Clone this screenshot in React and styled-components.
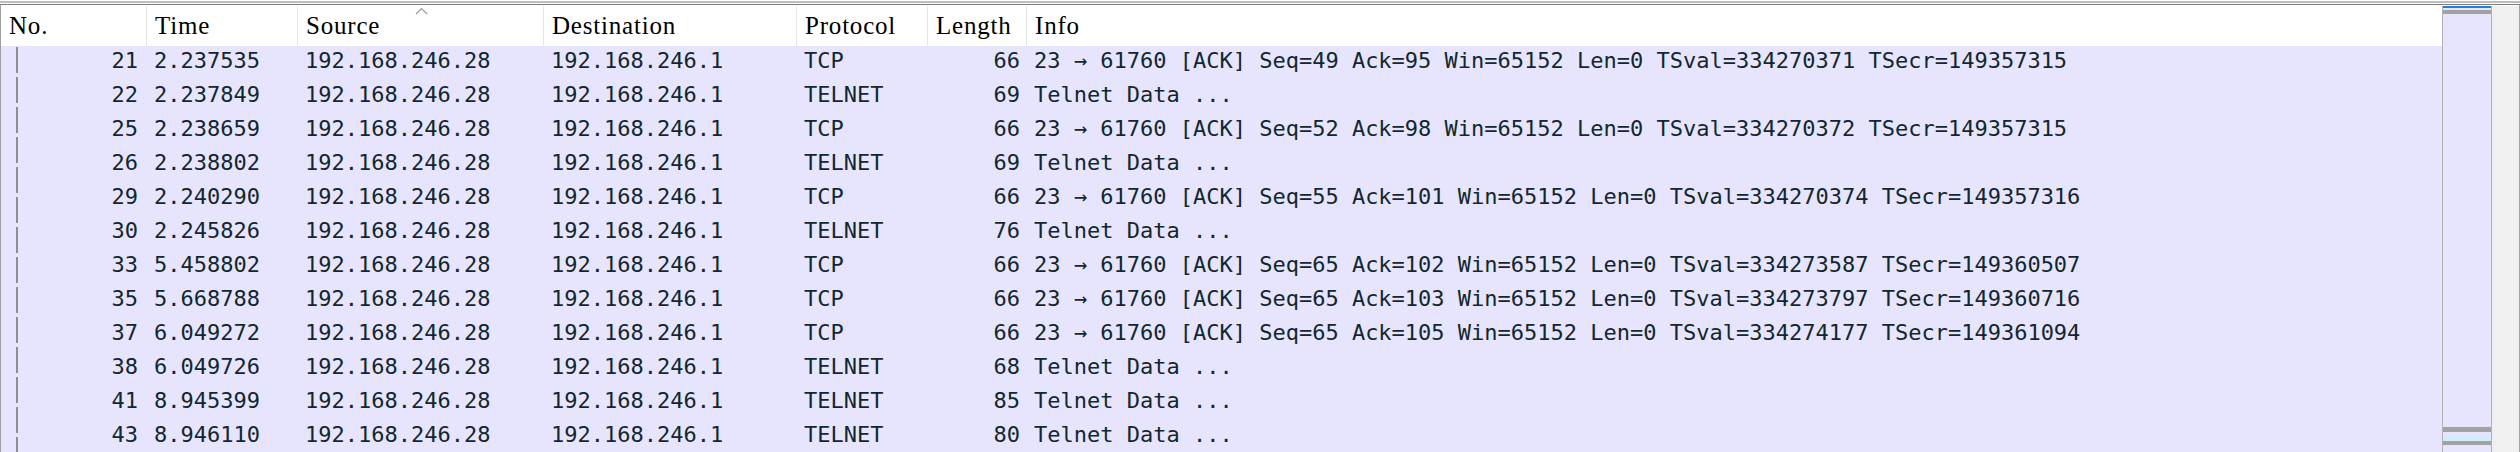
import React from 'react'
import styled, { createGlobalStyle } from 'styled-components'

const GlobalStyle = createGlobalStyle`
  html, body {
    margin: 0;
    padding: 0;
    background: #ffffff;
  }
  * {
    box-sizing: border-box;
  }
`

const columns = [
  { key: 'no', title: 'No.', width: 146, align: 'right' },
  { key: 'time', title: 'Time', width: 151, align: 'left' },
  { key: 'src', title: 'Source', width: 246, align: 'left', sorted: true },
  { key: 'dst', title: 'Destination', width: 253, align: 'left' },
  { key: 'proto', title: 'Protocol', width: 131, align: 'left' },
  { key: 'len', title: 'Length', width: 99, align: 'right' },
  { key: 'info', title: 'Info', width: null, align: 'left' },
]

const ack = (seq, ackNo, tsval, tsecr) =>
  `23 → 61760 [ACK] Seq=${seq} Ack=${ackNo} Win=65152 Len=0 TSval=${tsval} TSecr=${tsecr}`

const packets = [
  ['21', '2.237535', 'TCP', '66', ack(49, 95, '334270371', '149357315')],
  ['22', '2.237849', 'TELNET', '69', 'Telnet Data ...'],
  ['25', '2.238659', 'TCP', '66', ack(52, 98, '334270372', '149357315')],
  ['26', '2.238802', 'TELNET', '69', 'Telnet Data ...'],
  ['29', '2.240290', 'TCP', '66', ack(55, 101, '334270374', '149357316')],
  ['30', '2.245826', 'TELNET', '76', 'Telnet Data ...'],
  ['33', '5.458802', 'TCP', '66', ack(65, 102, '334273587', '149360507')],
  ['35', '5.668788', 'TCP', '66', ack(65, 103, '334273797', '149360716')],
  ['37', '6.049272', 'TCP', '66', ack(65, 105, '334274177', '149361094')],
  ['38', '6.049726', 'TELNET', '68', 'Telnet Data ...'],
  ['41', '8.945399', 'TELNET', '85', 'Telnet Data ...'],
  ['43', '8.946110', 'TELNET', '80', 'Telnet Data ...'],
].map(([no, time, proto, len, info]) => ({
  no,
  time,
  src: '192.168.246.28',
  dst: '192.168.246.1',
  proto,
  len,
  info,
}))

const PacketList = () => {
  return (
    <Page>
      <GlobalStyle />
      <SplitterEdge />
      <Frame>
        <TableArea>
          <HeaderRow>
            {columns.map((col) => (
              <HeaderCell key={col.key} $w={col.width}>
                {col.sorted ? (
                  <SortArrow width="13" height="8" viewBox="0 0 13 8">
                    <path d="M1 7 L6.5 1.5 L12 7" fill="none" stroke="#9a9a9a" strokeWidth="1.2" />
                  </SortArrow>
                ) : null}
                {col.title}
              </HeaderCell>
            ))}
          </HeaderRow>
          <Body>
            {packets.map((p) => (
              <Row key={p.no}>
                {columns.map((col) => (
                  <Cell key={col.key} $w={col.width} $align={col.align} $first={col.key === 'no'}>
                    {p[col.key]}
                  </Cell>
                ))}
              </Row>
            ))}
          </Body>
        </TableArea>
        <Minimap>
          <MiniMark $color="#1b7fe3" $h={2} />
          <MiniMark $color="#a2a2a2" $h={4} $top={2} />
          <MiniSpacer />
          <MiniMark $color="#a2a2a2" $h={5} />
          <MiniMark $color="#d3ebfb" $h={5} $top={4} />
          <MiniMark $color="#a2a2a2" $h={4} />
          <MiniMark $color="transparent" $h={7} />
        </Minimap>
        <Scrollbar />
      </Frame>
    </Page>
  )
}

const Page = styled.div`
  width: 2520px;
  height: 452px;
  overflow: hidden;
  display: flex;
  flex-direction: column;
  background: #ffffff;
`

const SplitterEdge = styled.div`
  height: 4px;
  flex: none;
  background: linear-gradient(to bottom, #ffffff 0 1px, #bdbdbd 1px 3px, #ffffff 3px 4px);
`

const Frame = styled.div`
  flex: 1;
  min-height: 0;
  display: flex;
  border-top: 1px solid #7b7b7b;
  border-left: 1px solid #a0a0a0;
  border-right: 1px solid #a0a0a0;
  overflow: hidden;
`

const TableArea = styled.div`
  flex: 1;
  min-width: 0;
  display: flex;
  flex-direction: column;
`

const HeaderRow = styled.div`
  display: flex;
  flex: none;
  height: 41px;
  padding-top: 1px;
  background: #ffffff;
`

const HeaderCell = styled.div`
  position: relative;
  flex: ${({ $w }) => ($w ? `0 0 ${$w}px` : '1')};
  height: 40px;
  padding: 0 8px;
  border-right: ${({ $w }) => ($w ? '1px solid #e5e5e5' : 'none')};
  font-family: "Liberation Serif", "DejaVu Serif", serif;
  font-size: 25px;
  letter-spacing: 0.8px;
  line-height: 40px;
  color: #000000;
  white-space: nowrap;
`

const SortArrow = styled.svg`
  position: absolute;
  top: 1px;
  left: 50%;
  margin-left: -6px;
`

const Body = styled.div`
  flex: 1;
  min-height: 0;
  overflow: hidden;
  background-color: #e6e5fd;
  background-image: linear-gradient(to bottom, #8e8e8e 26px, transparent 26px);
  background-size: 2px 30px;
  background-repeat: repeat-y;
  background-position: 15px 1px;
`

const Row = styled.div`
  display: flex;
  height: 34px;
  padding-bottom: 5px;
  font-family: "DejaVu Sans Mono", "Liberation Mono", monospace;
  font-size: 22px;
  line-height: 29px;
  color: #12272e;
`

const Cell = styled.div`
  flex: ${({ $w }) => ($w ? `0 0 ${$w}px` : '1')};
  padding: ${({ $first }) => ($first ? '0 9px 0 0' : '0 7px')};
  text-align: ${({ $align }) => $align};
  white-space: nowrap;
  overflow: hidden;
`

const Minimap = styled.div`
  flex: 0 0 50px;
  margin-top: 1px;
  display: flex;
  flex-direction: column;
  border-left: 1px solid #b2b2b2;
  border-right: 1px solid #b2b2b2;
  background: #e6e5fd;
`

const MiniMark = styled.div`
  flex: none;
  height: ${({ $h }) => $h}px;
  margin-top: ${({ $top }) => $top || 0}px;
  background: ${({ $color }) => $color};
`

const MiniSpacer = styled.div`
  flex: 1;
`

const Scrollbar = styled.div`
  flex: 0 0 27px;
  margin-top: 1px;
  background: #f0f0f0;
`

export default function App() {
  return <PacketList />
}
